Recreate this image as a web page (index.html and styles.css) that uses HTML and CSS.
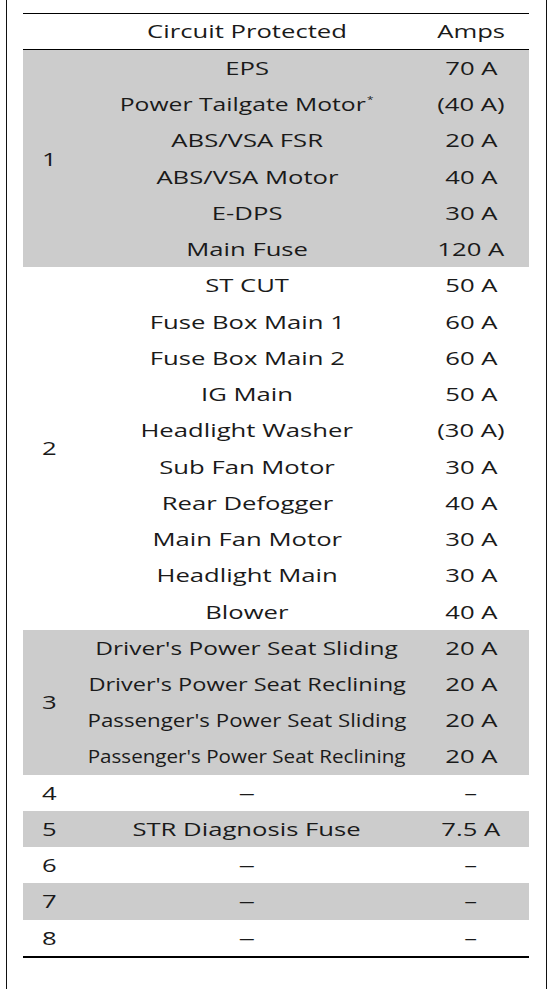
FILE: index.html
```html
<!DOCTYPE html>
<html lang="en">
<head>
<meta charset="utf-8">
<title>Fuse Table</title>
<link rel="stylesheet" href="styles.css">
</head>
<body>
<div class="page">
  <table class="fuses">
    <colgroup>
      <col class="c-num">
      <col class="c-circ">
      <col class="c-amp">
    </colgroup>
    <thead>
      <tr>
        <th class="num"></th>
        <th class="circ"><span class="t">Circuit Protected</span></th>
        <th class="amp"><span class="t">Amps</span></th>
      </tr>
    </thead>
    <tbody class="shade">
      <tr><td class="num" rowspan="6"><span class="t">1</span></td><td class="circ"><span class="t">EPS</span></td><td class="amp"><span class="t">70 A</span></td></tr>
      <tr><td class="circ"><span class="t fit-m">Power Tailgate Motor<span class="star">*</span></span></td><td class="amp"><span class="t">(40 A)</span></td></tr>
      <tr><td class="circ"><span class="t">ABS/VSA FSR</span></td><td class="amp"><span class="t">20 A</span></td></tr>
      <tr><td class="circ"><span class="t">ABS/VSA Motor</span></td><td class="amp"><span class="t">40 A</span></td></tr>
      <tr><td class="circ"><span class="t">E-DPS</span></td><td class="amp"><span class="t">30 A</span></td></tr>
      <tr><td class="circ"><span class="t">Main Fuse</span></td><td class="amp"><span class="t">120 A</span></td></tr>
    </tbody>
    <tbody>
      <tr><td class="num" rowspan="10"><span class="t">2</span></td><td class="circ"><span class="t">ST CUT</span></td><td class="amp"><span class="t">50 A</span></td></tr>
      <tr><td class="circ"><span class="t">Fuse Box Main 1</span></td><td class="amp"><span class="t">60 A</span></td></tr>
      <tr><td class="circ"><span class="t">Fuse Box Main 2</span></td><td class="amp"><span class="t">60 A</span></td></tr>
      <tr><td class="circ"><span class="t">IG Main</span></td><td class="amp"><span class="t">50 A</span></td></tr>
      <tr><td class="circ"><span class="t">Headlight Washer</span></td><td class="amp"><span class="t">(30 A)</span></td></tr>
      <tr><td class="circ"><span class="t">Sub Fan Motor</span></td><td class="amp"><span class="t">30 A</span></td></tr>
      <tr><td class="circ"><span class="t">Rear Defogger</span></td><td class="amp"><span class="t">40 A</span></td></tr>
      <tr><td class="circ"><span class="t">Main Fan Motor</span></td><td class="amp"><span class="t">30 A</span></td></tr>
      <tr><td class="circ"><span class="t">Headlight Main</span></td><td class="amp"><span class="t">30 A</span></td></tr>
      <tr><td class="circ"><span class="t">Blower</span></td><td class="amp"><span class="t">40 A</span></td></tr>
    </tbody>
    <tbody class="shade">
      <tr><td class="num" rowspan="4"><span class="t">3</span></td><td class="circ"><span class="t fit-a">Driver's Power Seat Sliding</span></td><td class="amp"><span class="t">20 A</span></td></tr>
      <tr><td class="circ"><span class="t fit-b">Driver's Power Seat Reclining</span></td><td class="amp"><span class="t">20 A</span></td></tr>
      <tr><td class="circ"><span class="t fit-c">Passenger's Power Seat Sliding</span></td><td class="amp"><span class="t">20 A</span></td></tr>
      <tr><td class="circ"><span class="t fit-d">Passenger's Power Seat Reclining</span></td><td class="amp"><span class="t">20 A</span></td></tr>
    </tbody>
    <tbody>
      <tr><td class="num"><span class="t">4</span></td><td class="circ"><span class="t dash">–</span></td><td class="amp"><span class="t">–</span></td></tr>
    </tbody>
    <tbody class="shade">
      <tr><td class="num"><span class="t">5</span></td><td class="circ"><span class="t">STR Diagnosis Fuse</span></td><td class="amp"><span class="t">7.5 A</span></td></tr>
    </tbody>
    <tbody>
      <tr><td class="num"><span class="t">6</span></td><td class="circ"><span class="t dash">–</span></td><td class="amp"><span class="t">–</span></td></tr>
    </tbody>
    <tbody class="shade">
      <tr><td class="num"><span class="t">7</span></td><td class="circ"><span class="t dash">–</span></td><td class="amp"><span class="t">–</span></td></tr>
    </tbody>
    <tbody class="last">
      <tr><td class="num"><span class="t">8</span></td><td class="circ"><span class="t dash">–</span></td><td class="amp"><span class="t">–</span></td></tr>
    </tbody>
  </table>
</div>
</body>
</html>
```
FILE: styles.css
```css
html, body {
  margin: 0;
  padding: 0;
  background: #ffffff;
}

body {
  font-family: "Open Sans", "Noto Sans", "DejaVu Sans", sans-serif;
  font-size: 19px;
  font-weight: 400;
  color: #1a1a1a;
}

.page {
  margin-left: 6px;
  width: 541px;
  height: 989px;
  border-left: 1px solid #111;
  border-right: 1px solid #111;
  box-sizing: border-box;
  padding-top: 13px;
}

.fuses {
  margin-left: 16px;
  width: 506px;
  border-collapse: collapse;
  table-layout: fixed;
  border-top: 1px solid #000;
}

.c-num { width: 58px; }
.c-circ { width: 332px; }
.c-amp { width: 116px; }

.fuses th {
  font-weight: 400;
  height: 35px;
  padding: 0;
  line-height: 35px;
  border-bottom: 1px solid #000;
}

.fuses td {
  height: 36.24px;
  padding: 0;
  line-height: 36.24px;
  box-sizing: border-box;
}

.shade td {
  background: #cccccc;
}

.last tr td {
  border-bottom: 2px solid #000;
}

.num {
  text-align: left;
  padding-left: 19px !important;
}

.circ, .amp {
  text-align: center;
  white-space: nowrap;
}

.t {
  display: inline-block;
  transform: scaleX(1.35);
  transform-origin: center;
}

.num .t {
  transform-origin: left center;
}

.t.fit-m { transform: scaleX(1.30); }
.t.fit-a { transform: scaleX(1.287); }
.t.fit-b { transform: scaleX(1.239); }
.t.fit-c { transform: scaleX(1.172); }
.t.fit-d { transform: scaleX(1.084); }
.t.dash { transform: scaleX(1.75); }

.star {
  font-size: 9px;
  line-height: 1;
  vertical-align: 8px;
  margin-left: 1px;
}
```
